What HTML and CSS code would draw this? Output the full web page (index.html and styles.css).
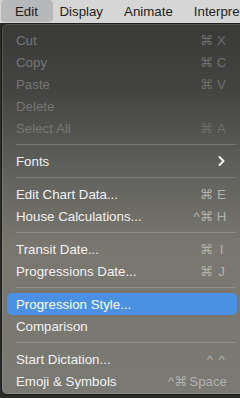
FILE: index.html
```html
<!DOCTYPE html>
<html lang="en">
<head>
  <meta charset="UTF-8">
  <title>Edit menu</title>
  <link rel="stylesheet" href="styles.css">
</head>
<body>
  <div class="menubar">
    <span class="mb-item active">Edit</span>
    <span class="mb-item">Display</span>
    <span class="mb-item">Animate</span>
    <span class="mb-item">Interpret</span>
  </div>

  <div class="menu">
    <div class="row disabled"><span class="label">Cut</span><span class="keys"><span class="mod">⌘</span><span class="key">X</span></span></div>
    <div class="row disabled"><span class="label">Copy</span><span class="keys"><span class="mod">⌘</span><span class="key">C</span></span></div>
    <div class="row disabled"><span class="label">Paste</span><span class="keys"><span class="mod">⌘</span><span class="key">V</span></span></div>
    <div class="row disabled"><span class="label">Delete</span></div>
    <div class="row disabled"><span class="label">Select All</span><span class="keys"><span class="mod">⌘</span><span class="key">A</span></span></div>
    <div class="sep"></div>
    <div class="row"><span class="label">Fonts</span>
      <svg class="chev" width="7" height="10" viewBox="0 0 7 10"><path d="M1.5 1 L5.5 5 L1.5 9" fill="none" stroke="#f2f2f2" stroke-width="1.9" stroke-linecap="round" stroke-linejoin="round"/></svg>
    </div>
    <div class="sep"></div>
    <div class="row"><span class="label">Edit Chart Data...</span><span class="keys"><span class="mod">⌘</span><span class="key">E</span></span></div>
    <div class="row"><span class="label">House Calculations...</span><span class="keys"><span class="mod">^⌘</span><span class="key">H</span></span></div>
    <div class="sep"></div>
    <div class="row"><span class="label">Transit Date...</span><span class="keys"><span class="mod">⌘</span><span class="key">I</span></span></div>
    <div class="row"><span class="label">Progressions Date...</span><span class="keys"><span class="mod">⌘</span><span class="key">J</span></span></div>
    <div class="sep"></div>
    <div class="row selected"><span class="label">Progression Style...</span></div>
    <div class="row"><span class="label">Comparison</span></div>
    <div class="sep"></div>
    <div class="row"><span class="label">Start Dictation...</span><span class="keys"><span class="mod">^</span><span class="key">^</span></span></div>
    <div class="row"><span class="label">Emoji &amp; Symbols</span><span class="keys"><span class="mod">^⌘</span><span class="key wide">Space</span></span></div>
  </div>
</body>
</html>
```

FILE: styles.css
```css
html, body {
  margin: 0;
  padding: 0;
}

body {
  width: 240px;
  height: 398px;
  overflow: hidden;
  background-color: #2b2b2a;
  font-family: "Liberation Sans", "DejaVu Sans", sans-serif;
  font-size: 13.3px;
}

/* Top menu bar */
.menubar {
  display: flex;
  height: 23px;
  align-items: stretch;
  background-color: #d6d6d6;
  white-space: nowrap;
}

.mb-item {
  display: flex;
  align-items: center;
  padding: 0 10.5px;
  color: #1e1e1e;
}

.mb-item.active {
  margin-left: 1px;
  margin-right: -4px;
  padding: 0 15px 0 14px;
  height: 22px;
  border-radius: 4px;
  background-color: #b6b8ba;
}

/* Drop-down panel */
.menu {
  margin-left: 1px;
  width: 250px;
  height: 372px;
  box-sizing: border-box;
  padding-top: 5px;
  border: 1px solid #1c1c1b;
  border-radius: 6px;
  box-shadow: inset 0 0 0 1px rgba(255, 255, 255, 0.12);
  background: linear-gradient(#393938 0%, #444442 18%, #5e5e5b 38%, #79776f 60%, #7a7973 100%);
}

.row {
  display: flex;
  align-items: center;
  justify-content: space-between;
  height: 22px;
  width: 230px;
  box-sizing: border-box;
  margin-left: 5px;
  padding: 0 10px 0 9px;
  border-radius: 5px;
  color: #f2f2f2;
  white-space: nowrap;
}

.row.disabled {
  color: #767674;
}

.row.selected {
  background-color: #4a90e3;
  color: #ffffff;
}

.keys {
  display: flex;
  align-items: center;
  color: #b3b2ad;
}

.row.disabled .keys {
  color: #6f6f6d;
}

.key {
  display: inline-block;
  min-width: 11px;
  margin-left: 3px;
  text-align: center;
}

.key.wide {
  margin-left: 2px;
}

.chev {
  margin-right: 2px;
}

.sep {
  height: 11px;
  display: flex;
  align-items: center;
  margin: 0 14px 0 14px;
}

.sep::after {
  content: "";
  display: block;
  width: 100%;
  height: 1px;
  background-color: rgba(255, 255, 255, 0.18);
}
```
